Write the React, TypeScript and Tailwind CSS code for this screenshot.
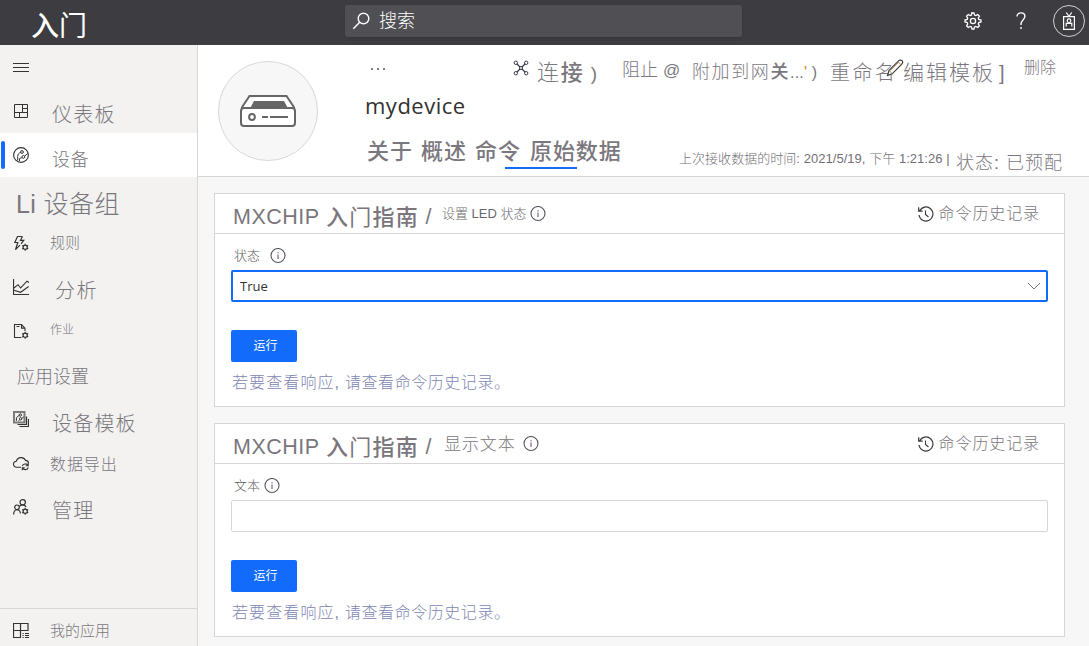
import type { ReactNode } from "react";

const stroke = {
  fill: "none",
  stroke: "currentColor",
  strokeWidth: 1,
} as const;

function Icon({ children, size = 16, className = "" }: { children: ReactNode; size?: number; className?: string }) {
  return (
    <svg width={size} height={size} viewBox={`0 0 ${size} ${size}`} className={`shrink-0 ${className}`} {...stroke}>
      {children}
    </svg>
  );
}

const MiniGear = () => (
  <g>
    <circle cx="12.2" cy="12.2" r="2.1" strokeWidth="1.2" />
    <path d="M12.2 8.7v1.4M12.2 14.3v1.4M9.2 10.4l1.2.7M14 13.3l1.2.7M9.2 14l1.2-.7M14 11.1l1.2-.7" strokeWidth="1.1" />
  </g>
);

const DashboardIcon = () => (
  <Icon>
    <path d="M1.5 1.5h13v13h-13zM9.5 1.5v8M1.5 9.5h13M9.5 5.5h5M6.5 9.5v5" />
  </Icon>
);

const DevicesIcon = () => (
  <Icon>
    <circle cx="8" cy="8" r="7.4" strokeWidth="1.1" />
    <circle cx="9" cy="5" r="1.4" />
    <circle cx="10.4" cy="9.9" r="1.4" />
    <path d="M7.700 5.500C5.500 6 4.700 7.500 4.700 9.500v3.800M9.100 10.500 6.500 11.500v2.500M11.600 9.200l3.200-2.700" />
  </Icon>
);

const RulesIcon = () => (
  <Icon>
    <path d="M9.5 1.5h-5L1.8 7.5h3L2.5 14.7 7 10.2M9.5 1.5 7.4 5.4h3.3L8 8.8" strokeWidth="1.2" />
    <MiniGear />
  </Icon>
);

const AnalyticsIcon = () => (
  <Icon>
    <path d="M.5 0v15.5H16" strokeWidth="1.2" />
    <path d="m1 9 4-3.3L7.6 9 14 2.2l2 1.3M1 11.3l6.6 2 8-5.8" strokeWidth="1.1" />
  </Icon>
);

const JobsIcon = () => (
  <Icon>
    <path d="M8.500 14.500h-7v-13h7l3.500 3.600v3M8.500 1.500v3.600H12M3.500 3.500h3" strokeWidth="1.1" />
    <MiniGear />
  </Icon>
);

const TemplatesIcon = () => (
  <Icon>
    <path d="M1 1h10.500v10.500H1z" stroke="#7b7b7b" strokeWidth="2" />
    <circle cx="7.300" cy="4" r="1.200" />
    <circle cx="7.600" cy="7.800" r="1.200" />
    <path d="M6.100 4.400 3.400 6.700v3.200M6.800 8.700 5.400 10M8.800 7.500l2-1.700" />
    <path d="M13.500 5.500v8h-9M15.500 8v7.500h-9" strokeWidth="1.200" />
  </Icon>
);

const ExportIcon = () => (
  <Icon>
    <path d="M8 12.200H3.600a3 3 0 0 1-.3-6A5 5 0 0 1 12.600 5.400a3 3 0 0 1 2.900 3" strokeWidth="1.100" />
    <path d="M9.300 11.200a3 3 0 0 1 5.600-.6M15.200 8.300v2.500h-2.500M15.300 12.300a3 3 0 0 1-5.600.7M9.300 15.300v-2.500h2.500" strokeWidth="1.100" />
  </Icon>
);

const AdminIcon = () => (
  <Icon>
    <circle cx="9.700" cy="3.300" r="2.700" strokeWidth="1.200" />
    <circle cx="4" cy="8.300" r="2.300" strokeWidth="1.200" />
    <path d="M.600 15.500c0-6.200 6.800-6.200 6.800-1M6.300 7.500c2-2.200 5.200-2 6.800.300" strokeWidth="1.200" />
    <MiniGear />
  </Icon>
);

const AppsIcon = () => (
  <Icon>
    <path d="M8 14.500H.5v-14h14.500v7.500M7.500.5v14M.5 7.500H15" strokeWidth="1.200" />
    <path d="M9.500 10.500h1.200M12 10.500h4M9.500 12.500h1.200M12 12.500h4M9.500 14.500h1.200M12 14.500h4" />
  </Icon>
);

const InfoIcon = ({ className }: { className: string }) => (
  <Icon className={`text-[#55545f] ${className}`}>
    <circle cx="8" cy="7.500" r="7" strokeWidth="1.100" />
    <path d="M8 6.500V11M8 4.200v1.200" stroke="#6a3d78" strokeWidth="1" />
  </Icon>
);

const HistoryIcon = () => (
  <Icon className="text-[#3d3a3d]">
    <path d="M1.600 5A7 7 0 1 1 1 9M.700 1.200v4h4" strokeWidth="1.200" />
    <path d="M7.500 4.500V8.500l3 2.500" strokeWidth="1.100" />
  </Icon>
);

const DeviceIcon = () => (
  <svg width="56" height="32" viewBox="0 0 56 32" fill="none" stroke="#666" strokeWidth="2">
    <path d="M1.500 13 9.500 1h37L54.500 13" fill="#fff" />
    <rect x="1" y="13" width="54" height="18" rx="3" fill="#fff" />
    <path d="M14 6h30l4 7.500H10z" fill="#666" stroke="none" />
    <circle cx="12" cy="22" r="2.900" />
    <path d="M22 22h6M30 22h18" />
  </svg>
);

const NetworkIcon = () => (
  <Icon className="text-[#33384a]">
    <circle cx="2.800" cy="2.800" r="1.700" />
    <circle cx="13.200" cy="2.800" r="1.700" />
    <circle cx="2.800" cy="13.200" r="1.700" />
    <circle cx="13.200" cy="13.200" r="1.700" />
    <circle cx="8" cy="8" r="1.500" />
    <path d="m4 4 3 3M12 4 9 7M4 12l3-3M12 12 9 9" strokeWidth="1.200" />
  </Icon>
);

const PencilIcon = () => (
  <Icon size={18}>
    <path d="M1.500 16.500 3 11.500 12.800 1.700a2.200 2.200 0 0 1 3.200 3.200L6.200 14.800z" stroke="#3b3a40" fill="#fff" strokeWidth="1.200" />
    <path d="m4.300 11.500 8-8M12 2.800l2.900 2.900M3.300 11.800l2.700 2.700" stroke="#b98a4e" />
  </Icon>
);

const navItems: { label: string; icon?: ReactNode; text: string; active?: boolean }[] = [
  { label: "仪表板", icon: <DashboardIcon />, text: "ml-[23px] pt-[8px] text-[20px] tracking-[1.200px]" },
  { label: "设备", icon: <DevicesIcon />, text: "ml-[23px] pt-[10px] text-[18px] tracking-[0.500px]", active: true },
  { label: "Li 设备组", text: "pt-[10px] text-[25px] tracking-[0.400px]" },
  { label: "规则", icon: <RulesIcon />, text: "ml-[21px] pb-[1px] text-[15px]" },
  { label: "分析", icon: <AnalyticsIcon />, text: "ml-[26px] pt-[7px] text-[20px] tracking-[1.600px]" },
  { label: "作业", icon: <JobsIcon />, text: "ml-[21px] pb-[2px] text-[12px]" },
  { label: "应用设置", text: "ml-[1px] pt-[4px] text-[18px]" },
  { label: "设备模板", icon: <TemplatesIcon />, text: "ml-[23px] pt-[9px] text-[20px] tracking-[1.200px]" },
  { label: "数据导出", icon: <ExportIcon />, text: "ml-[21px] pt-[4px] text-[16px] tracking-[0.900px]" },
  { label: "管理", icon: <AdminIcon />, text: "ml-[23px] pt-[8px] text-[20px] tracking-[1.200px]" },
];

function TopBar() {
  return (
    <header className="flex h-[45px] shrink-0 items-center bg-[#3d3c41] text-white">
      <h1 className="w-[345px] pt-[8px] pl-[31px] text-[28px] leading-none font-normal">
        <span className="font-medium">入</span>
        <span>门</span>
      </h1>
      <div className="mb-[3px] flex h-8 w-[397px] items-center rounded-[2px] bg-[#504f54] shadow-sm">
        <Icon size={18} className="ml-[7px]">
          <circle cx="11.500" cy="6.500" r="5.300" strokeWidth="1.400" />
          <path d="M7.700 10.300 1.300 16.700" strokeWidth="1.500" />
        </Icon>
        <span className="ml-[9px] text-[18px] leading-none font-light">搜索</span>
      </div>
      <svg width="18" height="18" viewBox="0 0 18 18" className="mb-[3px] ml-[222px]" fill="none" stroke="currentColor" strokeWidth="1.300">
        <path d="m7.600 1 .4 0h2l.5 2.100 1.300.5 1.900-1.100 1.700 1.700-1.100 1.900.5 1.300 2.200.6v2l-2.200.6-.5 1.300 1.100 1.900-1.700 1.700-1.900-1.100-1.300.5L10 17H8l-.5-2.100-1.300-.5-1.900 1.100-1.700-1.700 1.100-1.900-.5-1.300L1 10V8l2.200-.6.5-1.300-1.100-1.900 1.700-1.700 1.900 1.100 1.300-.5z" />
        <circle cx="9" cy="9" r="2.600" />
      </svg>
      <svg width="12" height="18" viewBox="0 0 12 18" className="mb-[3px] ml-[33px]" fill="none" stroke="currentColor" strokeWidth="1.400">
        <path d="M2 4.500C2.200-.300 9.800-.400 9.900 4.300 9.900 7.800 6 8.200 6 12v1M6 15v2" />
      </svg>
      <div className="mb-[3px] ml-[26px] flex size-8 items-center justify-center rounded-full border border-[#d2d2d4]">
        <svg width="12" height="18" viewBox="0 0 12 18" fill="none" stroke="currentColor" strokeWidth="1.200">
          <path d="M.600 4.600h10.800v12.800H.600zM3.300.500 6 4.500 8.700.500" />
          <circle cx="6" cy="8.700" r="1.800" />
          <path d="M3.200 14.500v-3.200h5.600v3.200" />
        </svg>
      </div>
    </header>
  );
}

function Sidebar() {
  return (
    <nav className="flex w-[198px] shrink-0 flex-col border-r border-[#d6d6d6] bg-[#f3f2f1] text-[#333]">
      <div className="flex h-[44px] items-center pl-[13px]">
        <Icon>
          <path d="M0 4.500h16M0 8.500h16M0 12.500h16" />
        </Icon>
      </div>
      {navItems.map((item) => (
        <div key={item.label} className={item.active ? "relative flex h-[44px] items-center bg-white pl-[13px]" : "flex h-[44px] items-center pl-[13px]"}>
          {item.active && <i className="absolute left-[1px] h-7 w-1 rounded-[2px] bg-[#136bfb]" />}
          {item.icon ?? <i className="w-[3px]" />}
          <span className={`leading-none font-light whitespace-nowrap text-[#79777d] ${item.text}`}>{item.label}</span>
        </div>
      ))}
      <div className="mt-auto flex h-[38px] items-center border-t border-[#d6d6d6] pl-[13px] pt-[6px]">
        <AppsIcon />
        <span className="ml-[21px] text-[15px] leading-none font-light text-[#79777d]">我的应用</span>
      </div>
    </nav>
  );
}

function DeviceHeader() {
  return (
    <section className="flex h-[132px] shrink-0 border-b border-[#d6d6d6] bg-white pl-[20px] text-[#7b777e]">
      <div className="mt-[16px] flex size-[100px] shrink-0 items-center justify-center rounded-full border border-[#d8d8d8] bg-[#f7f7f7]">
        <DeviceIcon />
      </div>
      <div className="ml-[48px] flex-1">
        <div className="mt-[12px] flex h-[28px] items-center leading-none font-light whitespace-nowrap">
          <span className="flex w-[147px] gap-[4px] pb-[5px] pl-[5px]">
            <i className="size-[2px] bg-[#777c90]" />
            <i className="size-[2px] bg-[#777c90]" />
            <i className="size-[2px] bg-[#777c90]" />
          </span>
          <span className="pb-[6px]"><NetworkIcon /></span>
          <span className="w-[84px] pt-[3px] pl-[8px] text-[22px] tracking-[1.800px]">连<b className="font-medium">接</b><span className="ml-[6px] text-[19px]">)</span></span>
          <span className="w-[79px] pb-[3px] pl-[9px] text-[18px]">阻止<span className="ml-[5px] text-[17px]">@</span></span>
          <span className="w-[138px] pt-[1px] text-[18px] tracking-[1.600px]">附加到网<b className="font-medium">关</b><span className="text-[16px] tracking-[0.200px]">...<span className="text-[#c98a2f]">'</span>&nbsp;)</span></span>
          <span className="w-[56px] pt-[3px] text-[20px] tracking-[2.400px]">重命名</span>
          <span className="w-[17px] pb-[6px]"><PencilIcon /></span>
          <span className="w-[121px] pt-[3px] text-[21px] tracking-[2px]">编辑模板<b className="ml-[4px] text-[20px] font-medium">]</b></span>
          <span className="pb-[6px] text-[16px]">删除</span>
        </div>
        <h2 className="mt-[6px] -ml-[1px] h-[31px] text-[22px] leading-[28px] font-normal tracking-[0.500px] text-[#323130] [font-family:'Open_Sans','Noto_Sans',sans-serif]">mydevice</h2>
        <div className="flex h-[52px] items-start leading-none whitespace-nowrap">
          <div className="w-[313px] pt-[19px]">
            <div className="-mr-2 ml-[1px] flex text-[22px] font-medium tracking-[0.900px]">
              <span className="w-[54px]">关于</span>
              <span className="w-[54px]">概述</span>
              <span className="w-[55px]">命令</span>
              <span>原始数据</span>
            </div>
            <div className="mt-[4px] ml-[139px] h-[2px] w-[72px] bg-[#136bfb]" />
          </div>
          <span className="w-[277px] pt-[30px] text-[13px] font-light tracking-[0.040px] text-[#737077]">上次接收数据的时间: 2021/5/19, 下午 1:21:26 |</span>
          <span className="pt-[32px] text-[18px] font-light tracking-[1px]">状态: 已预配</span>
        </div>
      </div>
    </section>
  );
}

interface CardProps {
  name: ReactNode;
  label: string;
  value: ReactNode;
  field: string;
  labelClass: string;
}

function CommandCard({ name, label, value, field, labelClass }: CardProps) {
  return (
    <article className="h-[214px] w-[851px] shrink-0 border border-[#d6d6d6] bg-white leading-none whitespace-nowrap text-[#7a767c]">
      <div className="flex h-[40px] items-center border-b border-[#d6d6d6] pl-[18px]">
        <h3 className="flex w-[211px] items-center pt-[9px] text-[21.500px] tracking-[0.500px]">
          MXCHIP&nbsp;<span className="text-[22px] tracking-[1.200px]"><b className="font-medium">入</b><span>门</span><b className="font-medium">指南</b></span>&nbsp;/
        </h3>
        {name}
        <div className="ml-auto flex items-center pr-[24px]">
          <HistoryIcon />
          <span className="ml-[5px] pt-[1px] text-[16px] font-light tracking-[0.900px]">命令历史记录</span>
        </div>
      </div>
      <div className="px-[16px]">
        <div className="flex h-[36px] items-center pt-[7px] pl-[3px] text-[13px] font-light text-[#5f5c62]">
          <span>{label}</span>
          <InfoIcon className={labelClass} />
        </div>
        <div className={field}>{value}</div>
        <button className="mt-[28px] flex h-8 w-[66px] items-center justify-center rounded-[2px] bg-[#136bfb] pb-[1px] pl-[3px] text-[12px] text-white">运行</button>
        <p className="mt-[13px] ml-[1px] flex text-[16px] font-light text-[#8087b2]">
          <span className="w-[113px] tracking-[1.100px]">若要查看响应,</span>
          <span className="tracking-[0.550px]">请查看命令历史记录。</span>
        </p>
      </div>
    </article>
  );
}

export default function App() {
  return (
    <div className="flex h-[646px] w-[1089px] flex-col overflow-hidden bg-[#f7f7f7] [font-family:'Liberation_Sans','Noto_Sans_CJK_SC',sans-serif]">
      <TopBar />
      <div className="flex min-h-0 flex-1">
        <Sidebar />
        <main className="flex min-w-0 flex-1 flex-col">
          <DeviceHeader />
          <div className="flex flex-col gap-[16px] pt-[16px] pl-[16px]">
            <CommandCard
              name={<><span className="-ml-[2px] text-[13px] font-light text-[#6b686e]">设置 LED 状态</span><InfoIcon className="ml-[3px]" /></>}
              label="状态"
              labelClass="ml-[10px]"
              field="flex h-8 items-center justify-between rounded-[2px] border-2 border-[#136bfb] pr-[5px] pl-[7px] text-[#323130]"
              value={<>
                <span className="text-[13px] [font-family:'Open_Sans','Noto_Sans',sans-serif]">True</span>
                <Icon size={14} className="text-[#777]"><path d="m1 4 6 6 6-6" /></Icon>
              </>}
            />
            <CommandCard
              name={<><span className="pt-[2px] text-[17px] font-light tracking-[0.900px]">显示文本</span><InfoIcon className="ml-[7px]" /></>}
              label="文本"
              labelClass="ml-[4px]"
              field="h-8 rounded-[2px] border border-[#d6d6d6]"
              value={null}
            />
          </div>
        </main>
      </div>
    </div>
  );
}
